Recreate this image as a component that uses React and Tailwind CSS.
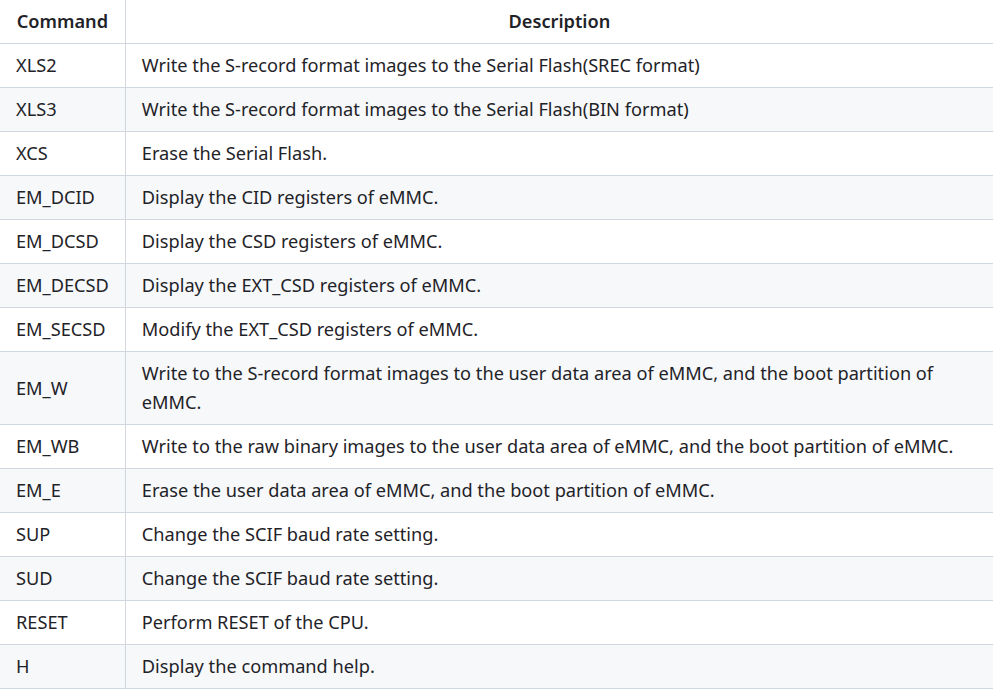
import React from "react";

const rows = [
  ["XLS2", "Write the S-record format images to the Serial Flash(SREC format)"],
  ["XLS3", "Write the S-record format images to the Serial Flash(BIN format)"],
  ["XCS", "Erase the Serial Flash."],
  ["EM_DCID", "Display the CID registers of eMMC."],
  ["EM_DCSD", "Display the CSD registers of eMMC."],
  ["EM_DECSD", "Display the EXT_CSD registers of eMMC."],
  ["EM_SECSD", "Modify the EXT_CSD registers of eMMC."],
  ["EM_W", "Write to the S-record format images to the user data area of eMMC, and the boot partition of eMMC."],
  ["EM_WB", "Write to the raw binary images to the user data area of eMMC, and the boot partition of eMMC."],
  ["EM_E", "Erase the user data area of eMMC, and the boot partition of eMMC."],
  ["SUP", "Change the SCIF baud rate setting."],
  ["SUD", "Change the SCIF baud rate setting."],
  ["RESET", "Perform RESET of the CPU."],
  ["H", "Display the command help."],
];

export default function App() {
  return (
    <div className="w-[993px] h-[689px] overflow-hidden bg-white text-[#1f2328]" style={{ fontFamily: '"Noto Sans", "Open Sans", sans-serif' }}>
      <table className="w-full border-collapse text-[18.2px] leading-[29px]">
        <thead>
          <tr className="bg-white">
            <th className="w-[125px] border-b border-r border-[#d0d7de] px-4 py-[7px] font-semibold text-center">Command</th>
            <th className="border-b border-[#d0d7de] px-4 py-[7px] font-semibold text-center">Description</th>
          </tr>
        </thead>
        <tbody>
          {rows.map(([c, d], i) => (
            <tr key={c} className={i % 2 === 1 ? "bg-[#f6f8fa]" : "bg-white"}>
              <td className="border-b border-r border-[#d0d7de] px-4 py-[7px] align-middle whitespace-nowrap">{c}</td>
              <td className="border-b border-[#d0d7de] px-4 py-[7px] align-middle">{d}</td>
            </tr>
          ))}
        </tbody>
      </table>
    </div>
  );
}
